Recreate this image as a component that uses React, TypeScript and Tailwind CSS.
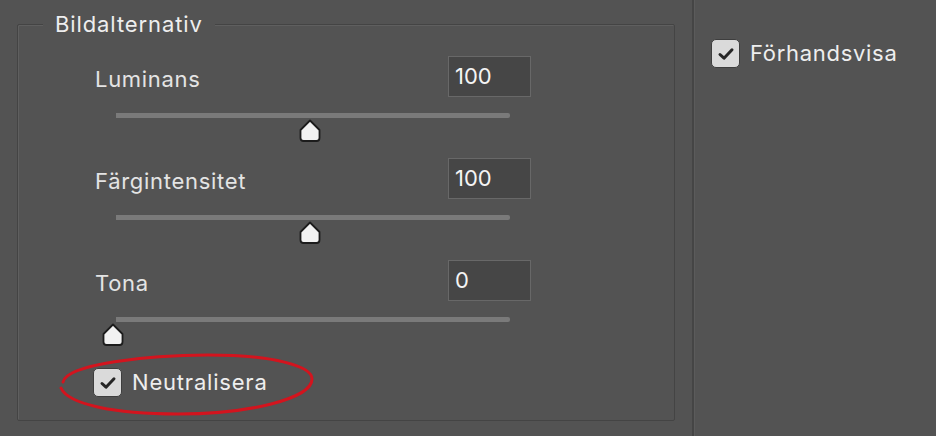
import React from 'react';

interface SliderRow {
  label: string;
  value: number;
  min: number;
  max: number;
}

const rows: SliderRow[] = [
  { label: 'Luminans', value: 100, min: 0, max: 200 },
  { label: 'Färgintensitet', value: 100, min: 0, max: 200 },
  { label: 'Tona', value: 0, min: 0, max: 200 },
];

const TRACK_WIDTH = 394;

const Thumb: React.FC = () => (
  <svg width="24" height="24" viewBox="0 0 24 24">
    <path
      d="M12 1.5 L21.5 11 V19 Q21.5 22 18.5 22 H5.5 Q2.5 22 2.5 19 V11 Z"
      fill="#f2f2f2"
      stroke="#1c1c1c"
      strokeWidth={1.8}
      strokeLinejoin="round"
    />
  </svg>
);

const Checkbox: React.FC = () => (
  <div className="w-[29px] h-[29px] rounded-[5px] bg-[#dadada] border border-[#3e3e3e] flex items-center justify-center shrink-0">
    <svg width="20" height="20" viewBox="0 0 20 20">
      <path
        d="M4 10.5 L8 14.2 L16 5.8"
        fill="none"
        stroke="#262626"
        strokeWidth={3}
        strokeLinecap="round"
        strokeLinejoin="round"
      />
    </svg>
  </div>
);

const Slider: React.FC<{ row: SliderRow }> = ({ row }) => {
  const fraction = (row.value - row.min) / (row.max - row.min);
  return (
    <div className="flex flex-col">
      {/* Label + value field */}
      <div className="flex items-center justify-between h-[41px]">
        <span className="text-[22px] text-[#e4e4e4] tracking-[0.7px] mt-[6px]">{row.label}</span>
        <div className="w-[83px] h-[41px] bg-[#464646] border border-[#686868] flex items-center pl-[6px] text-[22px] text-[#f4f4f4]">
          {row.value}
        </div>
      </div>

      {/* Track */}
      <div className="relative ml-[21px] mt-[16px] w-[394px] h-[5px] rounded-r-[2px] bg-[#7a7a7a]">
        <div
          className="absolute top-[6px] -translate-x-1/2"
          style={{ left: `${-3 + fraction * TRACK_WIDTH}px` }}
        >
          <Thumb />
        </div>
      </div>
    </div>
  );
};

const App: React.FC = () => {
  return (
    <div className="w-[936px] h-[436px] bg-[#535353] flex font-['Inter','Liberation_Sans',sans-serif] overflow-hidden">
      {/* Left column */}
      <div className="w-[692px] pl-[17px] pt-[12px]">
        <fieldset className="relative w-[658px] h-[409px] border border-[#444444] rounded-[2px] shadow-[inset_1px_1px_0_#5f5f5f]">
          <legend className="ml-[25px] px-[12px] bg-[#535353] text-[22px] leading-[24px] text-[#eeeeee] tracking-[0.9px]">
            Bildalternativ
          </legend>

          <div className="pl-[77px]">
            <div className="w-[436px] mt-[20px] flex flex-col gap-[40px]">
              {rows.map((row) => (
                <Slider key={row.label} row={row} />
              ))}
            </div>

            {/* Neutralisera */}
            <div className="mt-[44px] -ml-[2px] flex items-center gap-[10px]">
              <Checkbox />
              <span className="text-[22px] text-[#eeeeee] tracking-[0.8px]">Neutralisera</span>
            </div>
          </div>

          {/* Red highlight around the checkbox */}
          <svg
            className="absolute left-[40px] top-[315px] pointer-events-none"
            width="260"
            height="68"
            viewBox="0 0 260 68"
          >
            <path
              d="M5 31 C 9 13, 90 4, 150 4 C 215 4, 254 15, 254 28 C 254 48, 190 63, 120 63 C 55 63, 10 53, 3 37"
              fill="none"
              stroke="#d3141e"
              strokeWidth={3}
              strokeLinecap="round"
            />
          </svg>
        </fieldset>
      </div>

      {/* Separator */}
      <div className="w-[2px] h-full bg-[#454545]" />
      <div className="w-[1px] h-full bg-[#5b5b5b]" />

      {/* Right column */}
      <div className="flex-1 pl-[16px] pt-[37px]">
        <div className="flex items-center gap-[10px]">
          <Checkbox />
          <span className="text-[22px] text-[#eeeeee] tracking-[0.7px]">Förhandsvisa</span>
        </div>
      </div>
    </div>
  );
};

export default App;
